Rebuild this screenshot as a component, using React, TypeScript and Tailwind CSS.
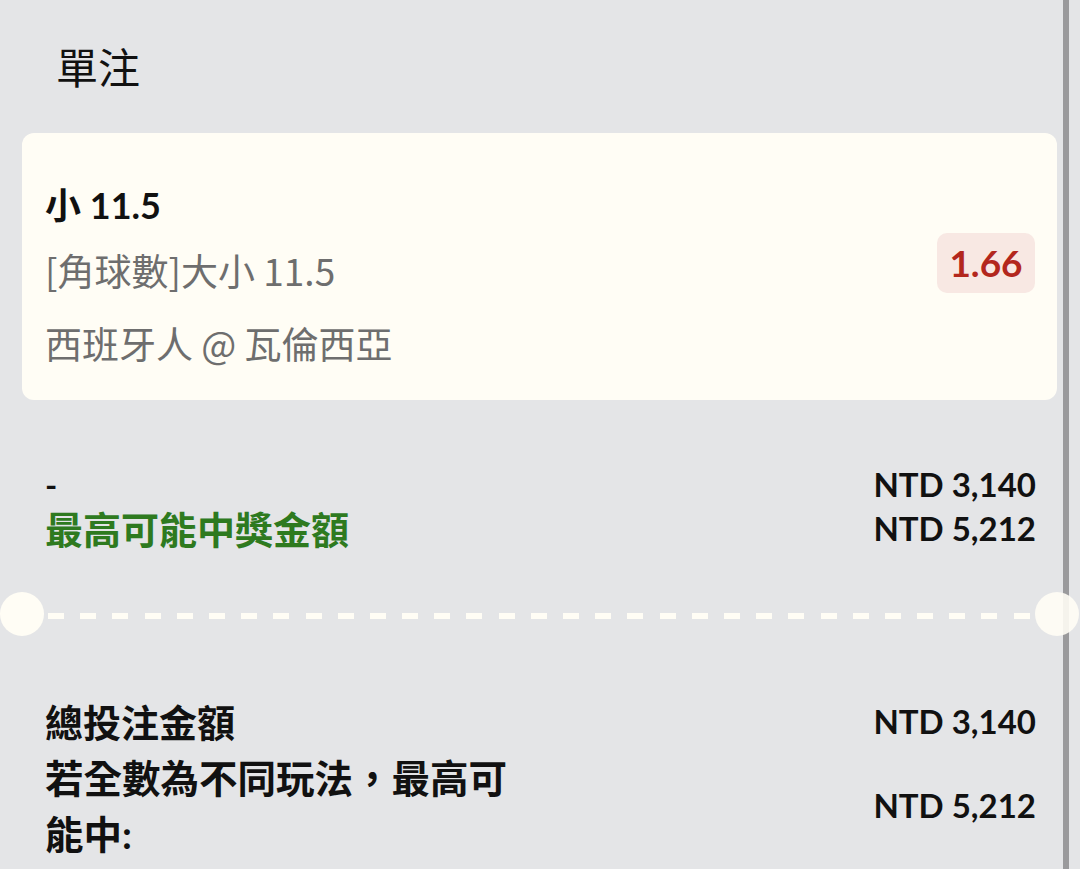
const dashes = Array.from({ length: 31 }, (_, i) => i)

export default function App() {
  return (
    <div className="flex min-h-screen bg-[#e4e5e7] font-['Lato','Noto_Sans_CJK_TC',sans-serif] text-[#111]">
      <main className="w-[1063px] shrink-0 pl-[22px] pr-[6px]">
        {/* Header */}
        <div className="flex h-[133px] items-center pl-[34px] pb-[2px] font-['Noto_Sans_CJK_TC',sans-serif] text-[42px] leading-none">
          單注
        </div>

        {/* Bet card */}
        <div className="flex items-center justify-between rounded-[12px] bg-[#fffdf5] pl-[23px] pr-[22px] pt-[48px] pb-[33px]">
          <div>
            <div className="text-[36px] font-bold leading-[48px]">小 11.5</div>
            <div className="mt-[17px] font-['Noto_Sans_CJK_TC',sans-serif] text-[37px] leading-[48px] text-[#6e6e6e]">
              [角球數]大小 11.5
            </div>
            <div className="mt-[25px] font-['Noto_Sans_CJK_TC',sans-serif] text-[37px] leading-[48px] text-[#6e6e6e]">
              西班牙人 @ 瓦倫西亞
            </div>
          </div>
          <div className="-mt-[22px] flex h-[60px] w-[98px] items-center justify-center rounded-[10px] bg-[#f8e8e3] text-[37px] font-bold text-[#b3271d]">
            1.66
          </div>
        </div>

        {/* Stake / potential win */}
        <div className="mt-[63px] pl-[23px] pr-[21px]">
          <div className="flex h-[44px] items-center justify-between">
            <span className="text-[33px] font-bold">-</span>
            <span className="text-[33px] font-bold">NTD 3,140</span>
          </div>
          <div className="flex h-[44px] items-center justify-between">
            <span className="text-[38px] font-bold text-[#2e7a1f]">最高可能中獎金額</span>
            <span className="text-[33px] font-bold">NTD 5,212</span>
          </div>
        </div>

        {/* Ticket divider */}
        <div className="-ml-[22px] -mr-[22px] mt-[41px] flex h-[44px] items-center">
          <div className="h-[44px] w-[44px] shrink-0 rounded-full bg-[#fffdf5]" />
          <div className="ml-[4px] mr-[5px] flex flex-1 justify-between pt-[3px]">
            {dashes.map((i) => (
              <div key={i} className="h-[6px] w-[16px] bg-[#fffdf5]" />
            ))}
          </div>
          <div className="relative h-[44px] w-[44px] shrink-0 rounded-full bg-[#fffdf5]/90" />
        </div>

        {/* Totals */}
        <div className="mt-[58px] pl-[23px] pr-[21px]">
          <div className="flex items-center justify-between">
            <span className="text-[38px] font-bold leading-[56px]">總投注金額</span>
            <span className="text-[33px] font-bold">NTD 3,140</span>
          </div>
          <div className="flex items-center justify-between">
            <span className="w-[480px] text-[38.5px] font-bold leading-[56px]">若全數為不同玩法，最高可能中:</span>
            <span className="text-[33px] font-bold">NTD 5,212</span>
          </div>
        </div>
      </main>
      <div className="w-[6px] shrink-0 bg-[#9a9a9c]" />
      <div className="flex-1" />
    </div>
  )
}
